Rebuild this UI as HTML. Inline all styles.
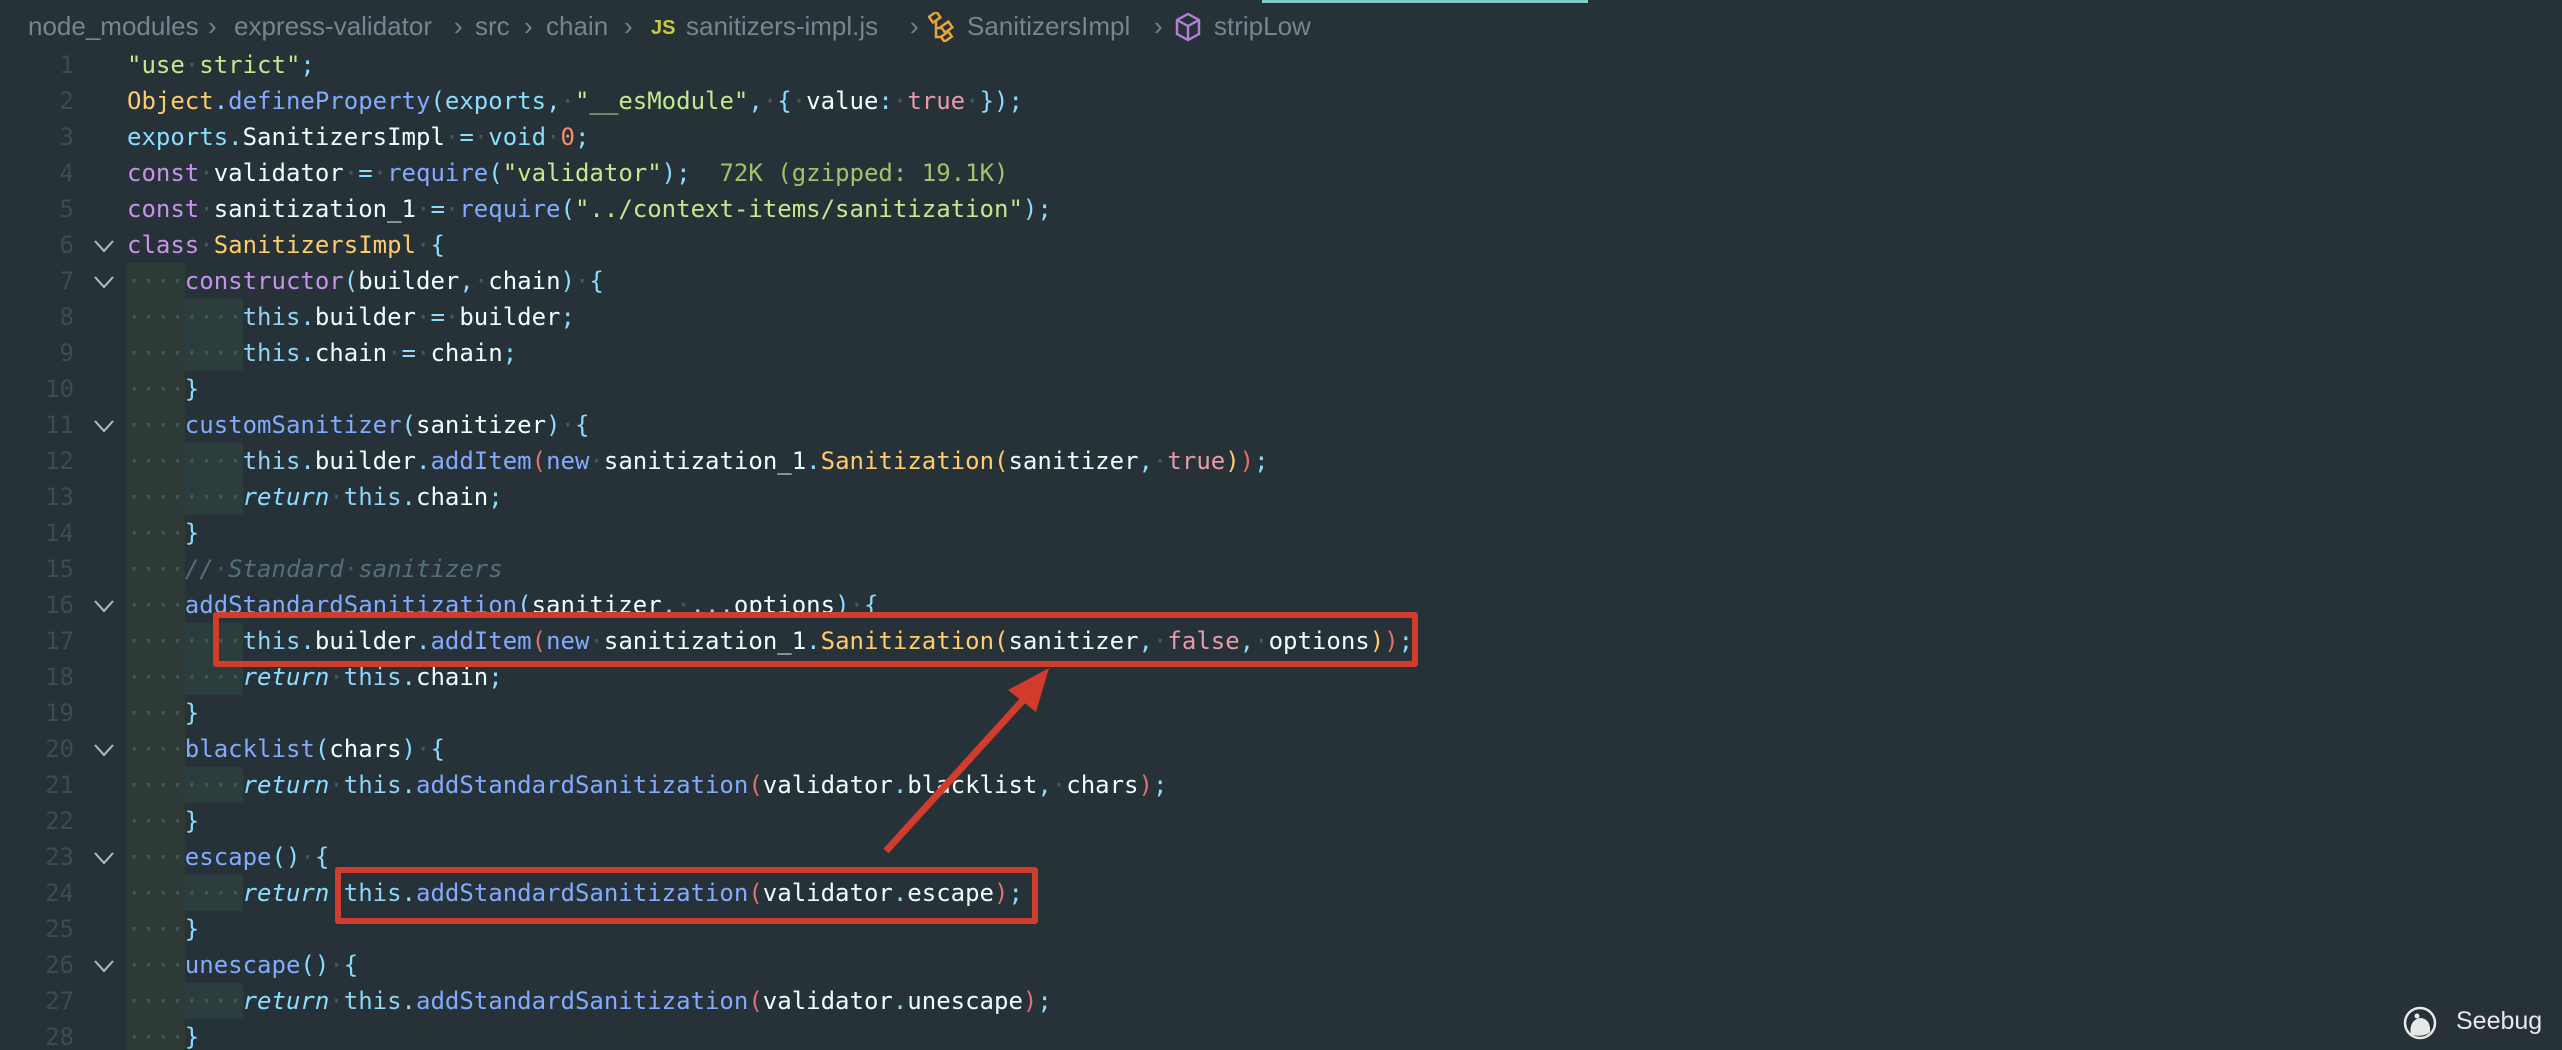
<!DOCTYPE html>
<html><head><meta charset="utf-8">
<style>
html,body{margin:0;padding:0;background:#263238;width:2562px;height:1050px;overflow:hidden;position:relative}
.bc{position:absolute;top:8px;font:26px "Liberation Sans",sans-serif;color:#74868e;white-space:nowrap;line-height:36px}
.ln{position:absolute;left:0;width:74px;text-align:right;font:24px "DejaVu Sans Mono",monospace;color:#3b4c54;line-height:36px;height:36px}
.code{position:absolute;left:127px;font:24px "DejaVu Sans Mono",monospace;color:#eeffff;white-space:pre;line-height:36px;height:36px}
.ch{position:absolute;left:93px;width:22px;height:14px}
i{font-style:normal;color:#46575d}
.k{color:#c792ea}.f{color:#82aaff}.s{color:#c3e88d}.b{color:#e79aa8}.n{color:#f78c6c}.y{color:#ffcb6b}.p{color:#89ddff}.t{color:#8fd3f5}.r{color:#89ddff;font-style:italic}.c{color:#546e7a;font-style:italic}.rb{color:#e07070}.g{color:#9fc36b}
.ig1{position:absolute;left:127px;width:58px;background:#2e3a35}
.ig2{position:absolute;left:185px;width:58px;height:36px;background:#2b3d3d}
.box{position:absolute;border:6px solid #d23c2c;border-radius:3px;box-sizing:border-box}
</style></head><body>
<div style="position:absolute;left:1262px;top:0;width:326px;height:3px;background:#80cbc4"></div>
<div class="bc" style="left:28px">node_modules</div>
<div class="bc" style="left:208px">›</div>
<div class="bc" style="left:234px">express-validator</div>
<div class="bc" style="left:454px">›</div>
<div class="bc" style="left:475px">src</div>
<div class="bc" style="left:524px">›</div>
<div class="bc" style="left:546px">chain</div>
<div class="bc" style="left:624px">›</div>
<div class="bc" style="left:651px;color:#cbcb41;font-weight:bold;font-size:20px;top:10px">JS</div>
<div class="bc" style="left:686px">sanitizers-impl.js</div>
<div class="bc" style="left:910px">›</div>
<svg style="position:absolute;left:928px;top:12px" width="28" height="30" viewBox="0 0 28 30" fill="none" stroke="#e8a33d" stroke-width="2.5"><rect x="2" y="2" width="9" height="7" transform="rotate(-35 6 5)"/><rect x="14" y="12" width="9" height="7" transform="rotate(-35 18 15)"/><rect x="14" y="22" width="9" height="6" transform="rotate(-35 18 25)"/><path d="M8 9 V25 H14 M8 16 H14"/></svg>
<div class="bc" style="left:967px">SanitizersImpl</div>
<div class="bc" style="left:1154px">›</div>
<svg style="position:absolute;left:1175px;top:12px" width="26" height="30" viewBox="0 0 26 30" fill="none" stroke="#b180d7" stroke-width="2.4"><path d="M13 2 L24 8 V22 L13 28 L2 22 V8 Z M2 8 L13 14 L24 8 M13 14 V28"/></svg>
<div class="bc" style="left:1214px">stripLow</div>

<div class="ig1" style="top:263px;height:787px"></div>
<div class="ig2" style="top:299px"></div><div class="ig2" style="top:335px"></div>
<div class="ig2" style="top:443px"></div><div class="ig2" style="top:479px"></div>
<div class="ig2" style="top:623px"></div><div class="ig2" style="top:659px"></div>
<div class="ig2" style="top:767px"></div><div class="ig2" style="top:875px"></div><div class="ig2" style="top:983px"></div>

<div class="ln" style="top:47px">1</div><div class="ln" style="top:83px">2</div><div class="ln" style="top:119px">3</div><div class="ln" style="top:155px">4</div><div class="ln" style="top:191px">5</div><div class="ln" style="top:227px">6</div><div class="ln" style="top:263px">7</div><div class="ln" style="top:299px">8</div><div class="ln" style="top:335px">9</div><div class="ln" style="top:371px">10</div><div class="ln" style="top:407px">11</div><div class="ln" style="top:443px">12</div><div class="ln" style="top:479px">13</div><div class="ln" style="top:515px">14</div><div class="ln" style="top:551px">15</div><div class="ln" style="top:587px">16</div><div class="ln" style="top:623px">17</div><div class="ln" style="top:659px">18</div><div class="ln" style="top:695px">19</div><div class="ln" style="top:731px">20</div><div class="ln" style="top:767px">21</div><div class="ln" style="top:803px">22</div><div class="ln" style="top:839px">23</div><div class="ln" style="top:875px">24</div><div class="ln" style="top:911px">25</div><div class="ln" style="top:947px">26</div><div class="ln" style="top:983px">27</div><div class="ln" style="top:1019px">28</div>

<svg class="ch" style="top:239px" viewBox="0 0 22 14"><path d="M2 2 L11 12 L20 2" fill="none" stroke="#b0bec5" stroke-width="2"/></svg>
<svg class="ch" style="top:275px" viewBox="0 0 22 14"><path d="M2 2 L11 12 L20 2" fill="none" stroke="#b0bec5" stroke-width="2"/></svg>
<svg class="ch" style="top:419px" viewBox="0 0 22 14"><path d="M2 2 L11 12 L20 2" fill="none" stroke="#b0bec5" stroke-width="2"/></svg>
<svg class="ch" style="top:599px" viewBox="0 0 22 14"><path d="M2 2 L11 12 L20 2" fill="none" stroke="#b0bec5" stroke-width="2"/></svg>
<svg class="ch" style="top:743px" viewBox="0 0 22 14"><path d="M2 2 L11 12 L20 2" fill="none" stroke="#b0bec5" stroke-width="2"/></svg>
<svg class="ch" style="top:851px" viewBox="0 0 22 14"><path d="M2 2 L11 12 L20 2" fill="none" stroke="#b0bec5" stroke-width="2"/></svg>
<svg class="ch" style="top:959px" viewBox="0 0 22 14"><path d="M2 2 L11 12 L20 2" fill="none" stroke="#b0bec5" stroke-width="2"/></svg>

<div class="code" style="top:47px"><span class="s">"use<i>·</i>strict"</span><span class="p">;</span></div>
<div class="code" style="top:83px"><span class="y">Object</span><span class="p">.</span><span class="f">defineProperty</span><span class="p">(</span><span class="p">exports</span><span class="p">,</span><i>·</i><span class="s">"__esModule"</span><span class="p">,</span><i>·</i><span class="p">{</span><i>·</i>value<span class="p">:</span><i>·</i><span class="b">true</span><i>·</i><span class="p">});</span></div>
<div class="code" style="top:119px"><span class="p">exports.</span>SanitizersImpl<i>·</i><span class="p">=</span><i>·</i><span class="p">void</span><i>·</i><span class="n">0</span><span class="p">;</span></div>
<div class="code" style="top:155px"><span class="k">const</span><i>·</i>validator<i>·</i><span class="p">=</span><i>·</i><span class="f">require</span><span class="p">(</span><span class="s">"validator"</span><span class="p">);</span>  <span class="g">72K (gzipped: 19.1K)</span></div>
<div class="code" style="top:191px"><span class="k">const</span><i>·</i>sanitization_1<i>·</i><span class="p">=</span><i>·</i><span class="f">require</span><span class="p">(</span><span class="s">"../context-items/sanitization"</span><span class="p">);</span></div>
<div class="code" style="top:227px"><span class="k">class</span><i>·</i><span class="y">SanitizersImpl</span><i>·</i><span class="p">{</span></div>
<div class="code" style="top:263px"><i>····</i><span class="k">constructor</span><span class="p">(</span>builder<span class="p">,</span><i>·</i>chain<span class="p">)</span><i>·</i><span class="p">{</span></div>
<div class="code" style="top:299px"><i>········</i><span class="t">this</span><span class="p">.</span>builder<i>·</i><span class="p">=</span><i>·</i>builder<span class="p">;</span></div>
<div class="code" style="top:335px"><i>········</i><span class="t">this</span><span class="p">.</span>chain<i>·</i><span class="p">=</span><i>·</i>chain<span class="p">;</span></div>
<div class="code" style="top:371px"><i>····</i><span class="p">}</span></div>
<div class="code" style="top:407px"><i>····</i><span class="f">customSanitizer</span><span class="p">(</span>sanitizer<span class="p">)</span><i>·</i><span class="p">{</span></div>
<div class="code" style="top:443px"><i>········</i><span class="t">this</span><span class="p">.</span>builder<span class="p">.</span><span class="f">addItem</span><span class="rb">(</span><span class="f">new</span><i>·</i>sanitization_1<span class="p">.</span><span class="y">Sanitization</span><span class="y">(</span>sanitizer<span class="p">,</span><i>·</i><span class="b">true</span><span class="y">)</span><span class="rb">)</span><span class="p">;</span></div>
<div class="code" style="top:479px"><i>········</i><span class="r">return</span><i>·</i><span class="t">this</span><span class="p">.</span>chain<span class="p">;</span></div>
<div class="code" style="top:515px"><i>····</i><span class="p">}</span></div>
<div class="code" style="top:551px"><i>····</i><span class="c">//<i>·</i>Standard<i>·</i>sanitizers</span></div>
<div class="code" style="top:587px"><i>····</i><span class="f">addStandardSanitization</span><span class="p">(</span>sanitizer<span class="p">,</span><i>·</i><span class="p">...</span>options<span class="p">)</span><i>·</i><span class="p">{</span></div>
<div class="code" style="top:623px"><i>········</i><span class="t">this</span><span class="p">.</span>builder<span class="p">.</span><span class="f">addItem</span><span class="rb">(</span><span class="f">new</span><i>·</i>sanitization_1<span class="p">.</span><span class="y">Sanitization</span><span class="y">(</span>sanitizer<span class="p">,</span><i>·</i><span class="b">false</span><span class="p">,</span><i>·</i>options<span class="y">)</span><span class="rb">)</span><span class="p">;</span></div>
<div class="code" style="top:659px"><i>········</i><span class="r">return</span><i>·</i><span class="t">this</span><span class="p">.</span>chain<span class="p">;</span></div>
<div class="code" style="top:695px"><i>····</i><span class="p">}</span></div>
<div class="code" style="top:731px"><i>····</i><span class="f">blacklist</span><span class="p">(</span>chars<span class="p">)</span><i>·</i><span class="p">{</span></div>
<div class="code" style="top:767px"><i>········</i><span class="r">return</span><i>·</i><span class="t">this</span><span class="p">.</span><span class="f">addStandardSanitization</span><span class="rb">(</span>validator<span class="p">.</span>blacklist<span class="p">,</span><i>·</i>chars<span class="rb">)</span><span class="p">;</span></div>
<div class="code" style="top:803px"><i>····</i><span class="p">}</span></div>
<div class="code" style="top:839px"><i>····</i><span class="f">escape</span><span class="p">()</span><i>·</i><span class="p">{</span></div>
<div class="code" style="top:875px"><i>········</i><span class="r">return</span><i>·</i><span class="t">this</span><span class="p">.</span><span class="f">addStandardSanitization</span><span class="rb">(</span>validator<span class="p">.</span>escape<span class="rb">)</span><span class="p">;</span></div>
<div class="code" style="top:911px"><i>····</i><span class="p">}</span></div>
<div class="code" style="top:947px"><i>····</i><span class="f">unescape</span><span class="p">()</span><i>·</i><span class="p">{</span></div>
<div class="code" style="top:983px"><i>········</i><span class="r">return</span><i>·</i><span class="t">this</span><span class="p">.</span><span class="f">addStandardSanitization</span><span class="rb">(</span>validator<span class="p">.</span>unescape<span class="rb">)</span><span class="p">;</span></div>
<div class="code" style="top:1019px"><i>····</i><span class="p">}</span></div>

<div class="box" style="left:213px;top:612px;width:1205px;height:55px"></div>
<div class="box" style="left:335px;top:867px;width:703px;height:57px"></div>
<svg style="position:absolute;left:0;top:0" width="2562" height="1050">
<line x1="886" y1="851" x2="1025" y2="698" stroke="#d23c2c" stroke-width="7"/>
<polygon points="1049,668 1008,690 1036,712" fill="#d23c2c"/>
</svg>

<svg style="position:absolute;left:2403px;top:1006px" width="36" height="36" viewBox="0 0 36 36"><circle cx="17" cy="17" r="15" fill="none" stroke="#e8e8e8" stroke-width="2.5"/><path d="M8 28 C6 20 10 13 17 12 C24 12 28 18 27 26 C23 30 13 31 8 28Z" fill="#e8e8e8"/><circle cx="14" cy="10" r="2.5" fill="#e8e8e8"/></svg>
<div style="position:absolute;left:2456px;top:1004px;font:25px 'Liberation Sans',sans-serif;color:#e8e8e8;line-height:34px">Seebug</div>
</body></html>
